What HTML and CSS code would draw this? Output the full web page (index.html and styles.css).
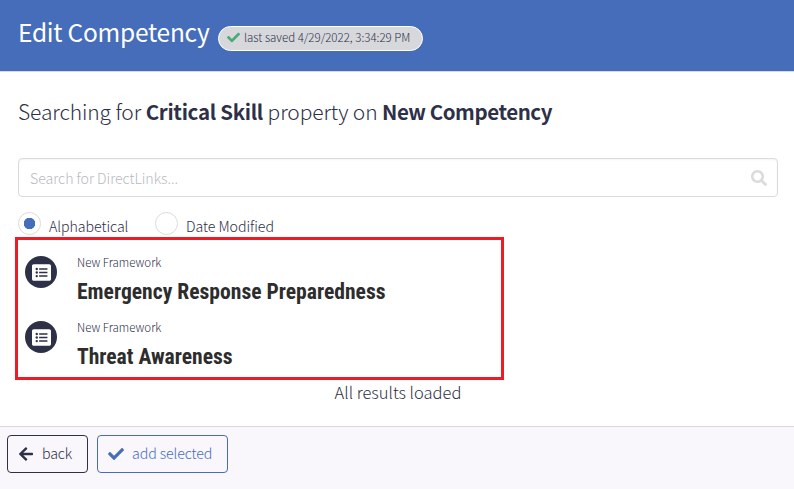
FILE: index.html
```html
<!DOCTYPE html>
<html lang="en">
<head>
<meta charset="utf-8">
<title>Edit Competency</title>
<link rel="stylesheet" href="styles.css">
</head>
<body>
<header class="header">
  <h1 class="title">Edit Competency</h1>
  <div class="saved">
    <svg class="saved-icon" viewBox="0 0 512 512"><path d="M173.898 439.404l-166.4-166.4c-9.997-9.997-9.997-26.206 0-36.204l36.203-36.204c9.997-9.998 26.207-9.998 36.204 0L192 312.69 432.095 72.596c9.997-9.997 26.207-9.997 36.204 0l36.203 36.204c9.997 9.997 9.997 26.206 0 36.204l-294.4 294.401c-9.998 9.997-26.207 9.997-36.204-.001z"/></svg>
    <span>last saved 4/29/2022, 3:34:29 PM</span>
  </div>
</header>
<main class="main">
  <h2 class="subtitle">Searching for <b>Critical Skill</b> property on <b class="target">New Competency</b></h2>
  <div class="search">
    <span class="placeholder">Search for DirectLinks...</span>
    <svg class="search-icon" viewBox="0 0 512 512"><path d="M505 442.700L405.300 343c-4.500-4.500-10.600-7-17-7H372c27.600-35.300 44-79.700 44-128C416 93.100 322.900 0 208 0S0 93.100 0 208s93.100 208 208 208c48.300 0 92.700-16.400 128-44v16.300c0 6.400 2.500 12.500 7 17l99.700 99.700c9.400 9.400 24.600 9.400 33.900 0l28.300-28.300c9.400-9.400 9.400-24.600.1-34zM208 336c-70.700 0-128-57.200-128-128 0-70.700 57.200-128 128-128 70.700 0 128 57.200 128 128 0 70.700-57.200 128-128 128z"/></svg>
  </div>
  <div class="sorts">
    <div class="sort first"><i class="radio on"></i><span>Alphabetical</span></div>
    <div class="sort"><i class="radio"></i><span>Date Modified</span></div>
  </div>
  <section class="results">
    <article class="result">
      <div class="badge"><svg viewBox="0 0 512 512"><path d="M464 32H48C21.490 32 0 53.490 0 80v352c0 26.510 21.490 48 48 48h416c26.510 0 48-21.490 48-48V80c0-26.510-21.490-48-48-48z"/><g class="marks"><circle cx="128" cy="160" r="32"/><circle cx="128" cy="256" r="32"/><circle cx="128" cy="352" r="32"/><path d="M192 140h224v40H192zM192 236h224v40H192zM192 332h224v40H192z"/></g></svg></div>
      <div><div class="framework">New Framework</div><h3 class="name">Emergency Response Preparedness</h3></div>
    </article>
    <article class="result">
      <div class="badge"><svg viewBox="0 0 512 512"><path d="M464 32H48C21.490 32 0 53.490 0 80v352c0 26.510 21.490 48 48 48h416c26.510 0 48-21.490 48-48V80c0-26.510-21.490-48-48-48z"/><g class="marks"><circle cx="128" cy="160" r="32"/><circle cx="128" cy="256" r="32"/><circle cx="128" cy="352" r="32"/><path d="M192 140h224v40H192zM192 236h224v40H192zM192 332h224v40H192z"/></g></svg></div>
      <div><div class="framework">New Framework</div><h3 class="name">Threat Awareness</h3></div>
    </article>
  </section>
  <p class="loaded">All results loaded</p>
</main>
<footer class="footer">
  <div class="button back"><svg viewBox="0 0 448 512"><path d="M257.500 445.100l-22.200 22.200c-9.400 9.400-24.600 9.400-33.900 0L7 273c-9.400-9.400-9.400-24.600 0-33.900L201.400 44.700c9.400-9.400 24.600-9.400 33.900 0l22.200 22.200c9.500 9.500 9.300 25-.4 34.300L136.600 216H424c13.300 0 24 10.700 24 24v32c0 13.300-10.700 24-24 24H136.600l120.500 114.800c9.800 9.300 10 24.800.4 34.300z"/></svg><span>back</span></div>
  <div class="button add"><svg viewBox="0 0 512 512"><path d="M173.898 439.404l-166.4-166.4c-9.997-9.997-9.997-26.206 0-36.204l36.203-36.204c9.997-9.998 26.207-9.998 36.204 0L192 312.690 432.095 72.596c9.997-9.997 26.207-9.997 36.204 0l36.203 36.204c9.997 9.997 9.997 26.206 0 36.204l-294.400 294.401c-9.998 9.997-26.207 9.997-36.204-.001z"/></svg><span>add selected</span></div>
</footer>
</body>
</html>
```
FILE: styles.css
```css
* { box-sizing: border-box; }
body {
  margin: 0;
  height: 489px;
  display: flex;
  flex-direction: column;
  overflow: hidden;
  background: #fff;
  color: #2e3048;
  font-family: "Source Sans Pro", "Noto Sans CJK SC", sans-serif;
  font-weight: 300;
  white-space: nowrap;
}
h1, h2, h3, p { margin: 0; font-weight: 300; }
svg { display: block; fill: currentColor; flex: none; }
.header {
  height: 72px;
  flex: none;
  display: flex;
  padding-left: 18px;
  background: #466db9;
  border-bottom: 1px solid #d5d9e5;
}
.title { width: 200px; color: #fff; font-size: 24.500px; font-weight: 400; letter-spacing: -.25px; line-height: 32px; padding-top: 16px; }
.saved {
  width: 205px;
  height: 25px;
  margin-top: 26px;
  display: flex;
  align-items: center;
  padding-left: 8px;
  border: 1px solid #fff;
  border-radius: 13px;
  background: #d6d8dc;
  font-size: 11.500px;
  line-height: 20px;
}
.saved span { padding-bottom: 3px; }
.saved-icon { width: 13px; height: 13px; margin: 0 4px 2px 0; color: #4ba975; }
.main { height: 354px; flex: none; padding: 22px 16px 0 18px; }
.subtitle { font-size: 21px; letter-spacing: -.12px; line-height: 34px; }
.subtitle b { font-weight: 700; font-size: 20.500px; letter-spacing: -.3px; }
.subtitle .target { letter-spacing: -.45px; }
.search {
  height: 39px;
  margin-top: 30px;
  display: flex;
  align-items: center;
  justify-content: space-between;
  padding: 0 10px 0 11px;
  border: 1px solid #dbdbdb;
  border-radius: 4px;
  box-shadow: inset 0 1px 2px rgba(10, 10, 10, .05);
}
.placeholder { color: #b9bac0; font-size: 14.200px; letter-spacing: -.05px; }
.search-icon { width: 16px; height: 16px; color: #dbdbdb; }
.sorts { height: 25px; margin-top: 15px; display: flex; }
.sort { display: flex; font-size: 14.200px; letter-spacing: -.05px; line-height: 28px; }
.sort.first { width: 137px; }
.radio { width: 23px; height: 23px; margin-right: 8px; border: 1px solid #dbdbdb; border-radius: 50%; }
.radio.on { background: radial-gradient(circle, #466db9 5.500px, transparent 6px); }
.results {
  width: 489px;
  height: 143px;
  margin-left: -3px;
  padding: 12px 0 0 7px;
  border: 3px solid #ed1c24;
}
.result { height: 65px; display: flex; }
.badge {
  width: 32px;
  height: 32px;
  margin: 4px 20px 0 0;
  display: grid;
  place-items: center;
  border-radius: 50%;
  background: #2e3048;
  color: #fff;
}
.badge svg { width: 19px; height: 19px; }
.marks { fill: #2e3048; }
.framework { font-size: 11.500px; line-height: 20px; }
.name {
  width: max-content;
  margin-top: 5px;
  color: #2d2d2d;
  font: 700 21.600px/30px "Roboto Condensed", Roboto, sans-serif;
  font-stretch: 75%;
}
.loaded { font-size: 16.500px; line-height: 24px; text-align: center; }
.footer { height: 63px; flex: none; display: flex; gap: 9px; padding: 8px 7px; background: #f9f7fb; border-top: 1px solid #dbdbdf; }
.button { height: 38px; display: flex; align-items: center; border: 1px solid; border-radius: 4px; font-size: 14.200px; letter-spacing: -.1px; }
.button span { padding-bottom: 3px; }
.back { width: 81px; padding-left: 11px; }
.back svg { width: 14px; height: 16px; margin-right: 9px; }
.add { width: 131px; padding-left: 10px; color: #466db9; }
.add svg { width: 16px; height: 16px; margin-right: 8px; }
```
